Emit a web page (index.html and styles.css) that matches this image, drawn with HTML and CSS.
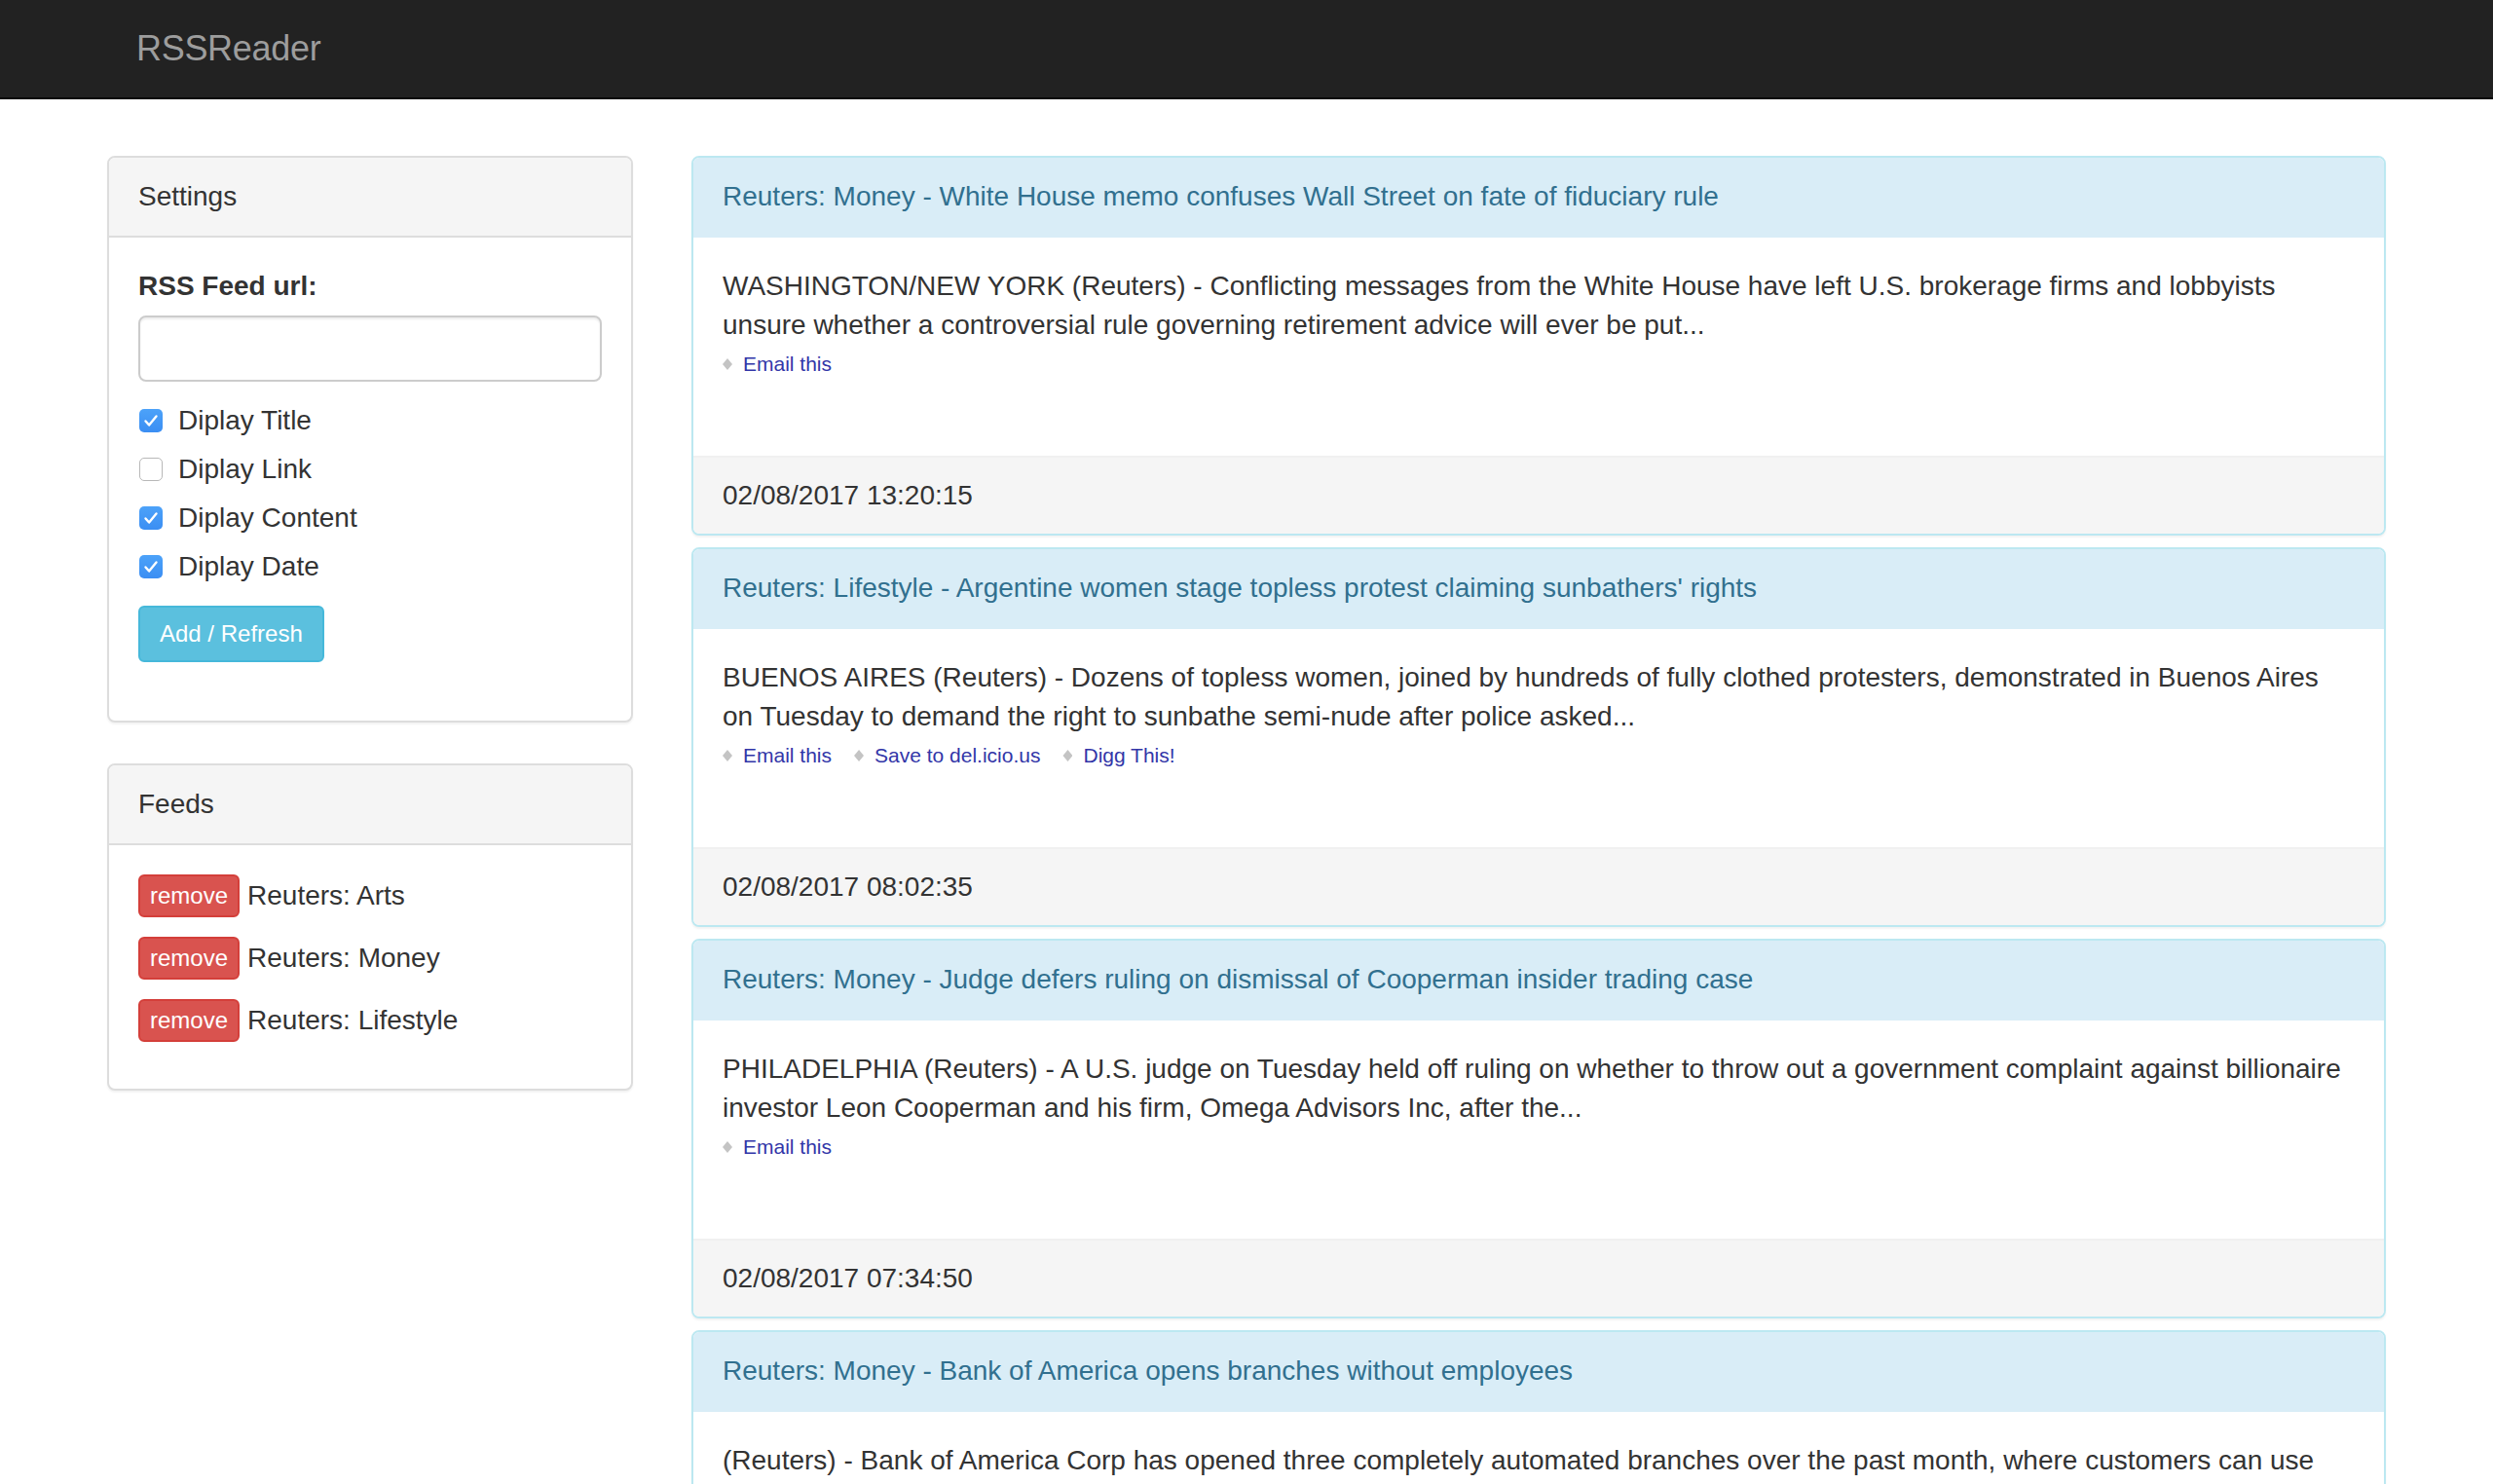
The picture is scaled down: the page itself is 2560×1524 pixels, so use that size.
FILE: index.html
```html
<!DOCTYPE html>
<html lang="en">
<head>
<meta charset="utf-8">
<title>RSSReader</title>
<link rel="stylesheet" href="styles.css">
</head>
<body>
<nav class="navbar">
  <div class="nav-inner"><span class="brand">RSSReader</span></div>
</nav>
<div class="container">
  <aside class="sidebar">
    <section class="panel panel-default settings">
      <div class="panel-heading">Settings</div>
      <div class="panel-body">
        <form class="settings-form">
          <label class="field-label">RSS Feed url:</label>
          <input class="form-control" type="text">
          <div class="checks">
            <label class="check"><span class="box checked"><svg viewBox="0 0 24 24" width="24" height="24"><path d="M6.5 12.5l3.6 4 7.4-9" fill="none" stroke="#fff" stroke-width="2.4" stroke-linecap="round" stroke-linejoin="round"/></svg></span>Diplay Title</label>
            <label class="check"><span class="box"></span>Diplay Link</label>
            <label class="check"><span class="box checked"><svg viewBox="0 0 24 24" width="24" height="24"><path d="M6.5 12.5l3.6 4 7.4-9" fill="none" stroke="#fff" stroke-width="2.4" stroke-linecap="round" stroke-linejoin="round"/></svg></span>Diplay Content</label>
            <label class="check"><span class="box checked"><svg viewBox="0 0 24 24" width="24" height="24"><path d="M6.5 12.5l3.6 4 7.4-9" fill="none" stroke="#fff" stroke-width="2.4" stroke-linecap="round" stroke-linejoin="round"/></svg></span>Diplay Date</label>
          </div>
          <button class="btn btn-info" type="button">Add / Refresh</button>
        </form>
      </div>
    </section>
    <section class="panel panel-default feeds">
      <div class="panel-heading">Feeds</div>
      <div class="panel-body">
        <div class="feed-row"><button class="btn btn-danger" type="button">remove</button><span>Reuters: Arts</span></div>
        <div class="feed-row"><button class="btn btn-danger" type="button">remove</button><span>Reuters: Money</span></div>
        <div class="feed-row"><button class="btn btn-danger" type="button">remove</button><span>Reuters: Lifestyle</span></div>
      </div>
    </section>
  </aside>
  <main class="items">
    <article class="panel panel-info">
      <div class="panel-heading">Reuters: Money - White House memo confuses Wall Street on fate of fiduciary rule</div>
      <div class="panel-body">
        <p class="summary">WASHINGTON/NEW YORK (Reuters) - Conflicting messages from the White House have left U.S. brokerage firms and lobbyists unsure whether a controversial rule governing retirement advice will ever be put...</p>
        <div class="flare"><a class="flare-link">Email this</a></div>
        <div class="tracker"></div>
      </div>
      <div class="panel-footer">02/08/2017 13:20:15</div>
    </article>
    <article class="panel panel-info">
      <div class="panel-heading">Reuters: Lifestyle - Argentine women stage topless protest claiming sunbathers' rights</div>
      <div class="panel-body">
        <p class="summary">BUENOS AIRES (Reuters) - Dozens of topless women, joined by hundreds of fully clothed protesters, demonstrated in Buenos Aires on Tuesday to demand the right to sunbathe semi-nude after police asked...</p>
        <div class="flare"><a class="flare-link">Email this</a><a class="flare-link">Save to del.icio.us</a><a class="flare-link">Digg This!</a></div>
        <div class="tracker"></div>
      </div>
      <div class="panel-footer">02/08/2017 08:02:35</div>
    </article>
    <article class="panel panel-info">
      <div class="panel-heading">Reuters: Money - Judge defers ruling on dismissal of Cooperman insider trading case</div>
      <div class="panel-body">
        <p class="summary">PHILADELPHIA (Reuters) - A U.S. judge on Tuesday held off ruling on whether to throw out a government complaint against billionaire investor Leon Cooperman and his firm, Omega Advisors Inc, after the...</p>
        <div class="flare"><a class="flare-link">Email this</a></div>
        <div class="tracker"></div>
      </div>
      <div class="panel-footer">02/08/2017 07:34:50</div>
    </article>
    <article class="panel panel-info">
      <div class="panel-heading">Reuters: Money - Bank of America opens branches without employees</div>
      <div class="panel-body">
        <p class="summary">(Reuters) - Bank of America Corp has opened three completely automated branches over the past month, where customers can use</p>
      </div>
    </article>
  </main>
</div>
</body>
</html>
```
FILE: styles.css
```css
* { box-sizing: border-box; }

html, body {
  margin: 0;
  padding: 0;
}

body {
  height: 100vh;
  overflow: hidden;
  background: #fff;
  color: #333;
  font-family: "Liberation Sans", Arial, Helvetica, sans-serif;
  font-size: 28px;
  line-height: 40px;
}

/* ---------- navbar ---------- */
.navbar {
  background: #222;
  border-bottom: 2px solid #080808;
  height: 102px;
}

.nav-inner {
  width: 2340px;
  margin: 0 auto;
  padding-left: 30px;
}

.brand {
  display: inline-block;
  padding: 30px 0;
  font-size: 36px;
  line-height: 40px;
  color: #9d9d9d;
  letter-spacing: -0.3px;
}

/* ---------- layout ---------- */
.container {
  width: 2340px;
  margin: 0 auto;
  padding-top: 58px;
  display: grid;
  grid-template-columns: 540px 1740px;
  column-gap: 60px;
  align-items: start;
}

/* ---------- panels ---------- */
.panel {
  background: #fff;
  border: 2px solid #ddd;
  border-radius: 8px;
  box-shadow: 0 2px 2px rgba(0, 0, 0, 0.05);
  overflow: hidden;
}

.panel-heading {
  padding: 20px 30px;
  line-height: 40px;
  background: #f5f5f5;
  border-bottom: 2px solid #ddd;
  color: #333;
}

.panel-body {
  padding: 30px;
}

.panel-footer {
  padding: 19px 30px;
  line-height: 40px;
  background: #f5f5f5;
  border-top: 2px solid #f0f0f0;
  color: #333;
}

.settings { margin-bottom: 42px; }

/* settings form */
.settings-form {
  margin: 0 0 30px;
  display: flex;
  flex-direction: column;
  align-items: flex-start;
}

.field-label {
  display: block;
  font-weight: bold;
  line-height: 40px;
  margin-bottom: 10px;
}

.form-control {
  display: block;
  width: 100%;
  height: 68px;
  padding: 12px 24px;
  font: inherit;
  color: #555;
  background: #fff;
  border: 2px solid #ccc;
  border-radius: 8px;
  box-shadow: inset 0 2px 2px rgba(0, 0, 0, 0.075);
  outline: none;
}

.checks {
  margin-top: 20px;
  display: flex;
  flex-direction: column;
  gap: 10px;
}

.check {
  display: flex;
  align-items: center;
  height: 40px;
  line-height: 40px;
  font-weight: normal;
}

.box {
  width: 24px;
  height: 24px;
  margin: 0 16px 0 1px;
  border-radius: 5px;
  border: 1.5px solid #b8b8b8;
  background: #fff;
  display: flex;
  align-items: center;
  justify-content: center;
  flex-shrink: 0;
}

.box.checked {
  border: none;
  background: linear-gradient(#4ca2f9, #3b8ef3);
}

.box svg { display: block; }

/* buttons */
.btn {
  font-family: inherit;
  border: 2px solid transparent;
  cursor: pointer;
  white-space: nowrap;
}

.btn-info {
  margin-top: 20px;
  height: 58px;
  padding: 0 20px;
  font-size: 24px;
  line-height: 36px;
  color: #fff;
  background: #5bc0de;
  border-color: #46b8da;
  border-radius: 6px;
}

.btn-danger {
  height: 44px;
  padding: 0 10px;
  font-size: 24px;
  line-height: 36px;
  color: #fff;
  background: #d9534f;
  border-color: #d43f3a;
  border-radius: 6px;
}

/* feeds list */
.feeds .panel-body { padding-bottom: 28px; }

.feed-row {
  display: flex;
  align-items: center;
  gap: 8px;
  height: 44px;
  margin-bottom: 20px;
}

/* ---------- news items ---------- */
.panel-info {
  border-color: #bce8f1;
  margin-bottom: 12px;
}

.panel-info > .panel-heading {
  background: #d9edf7;
  border-bottom-color: #d9edf7;
  color: #31708f;
}

.summary {
  margin: 0;
  line-height: 40px;
}

.flare {
  display: flex;
  align-items: center;
  gap: 23px;
  height: 40px;
  font-size: 21px;
}

.flare-link {
  display: inline-flex;
  align-items: center;
  gap: 11px;
  color: #3236a8;
  text-decoration: none;
}

.flare-link::before {
  content: "";
  width: 10px;
  height: 12px;
  background: #c4c4c4;
  clip-path: polygon(50% 0, 100% 50%, 50% 100%, 0 50%);
}

.tracker {
  height: 44px;
}
```
